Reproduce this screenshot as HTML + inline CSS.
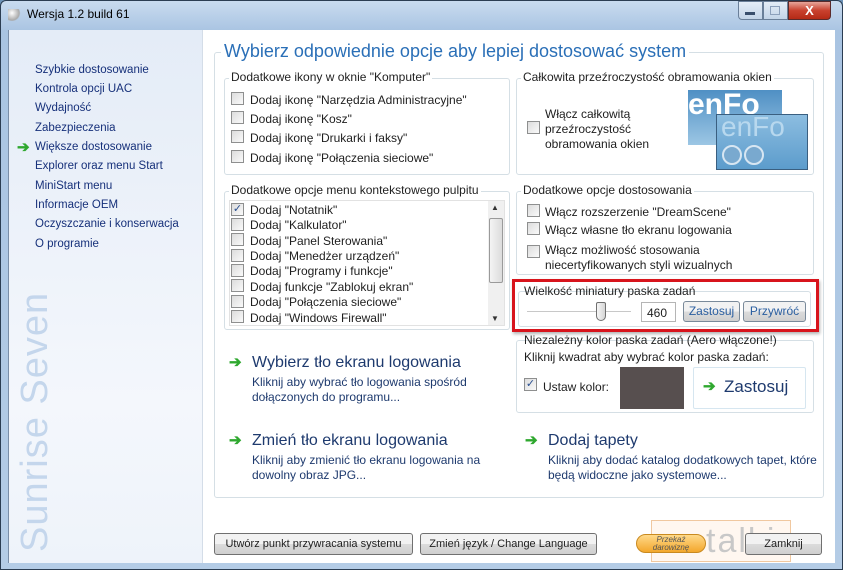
<!DOCTYPE html>
<html><head><meta charset="utf-8"><style>
*{margin:0;padding:0;box-sizing:border-box}
body{width:843px;height:570px;overflow:hidden;font-family:"Liberation Sans",sans-serif;font-size:12px;color:#1e1e1e;background:#6d93b8;position:relative}
.a{position:absolute}
.frame{left:0;top:0;width:843px;height:570px;background:linear-gradient(#c9dbef,#a9c4e2 30px,#b4cce6);border:1px solid #2b3d52;border-radius:6px 6px 0 0}
.left{left:8px;top:30px;width:194px;height:533px;background:linear-gradient(#e4ecf7,#f4f7fc 70%,#eef3fa);border-left:1px solid #7a8ea8}
.main{left:202px;top:30px;width:633px;height:533px;background:#fff;border-left:1px solid #d4dde8}
.nav{left:35px;color:#16307a;font-size:11.5px}
.grp{border:1px solid #d5dfe5;border-radius:3px}
.gt{background:#fff;padding:0 2px;font-size:12px;color:#222}
.cb{width:13px;height:13px;border:1px solid #8e8f8f;background:linear-gradient(135deg,#dcdcdc,#fafafa)}
.lbl{font-size:12px}
.btn{border:1px solid #707070;border-radius:3px;background:linear-gradient(#f2f2f2 50%,#dcdcdc 50%,#cfcfcf);font-size:11px;text-align:center}
.arrow{color:#2fa82f;font-weight:bold;font-size:15px}
.lk{color:#1e3a6e}
</style></head><body>
<div class="a frame"></div>
<div class="a" style="left:8px;top:9px;width:13px;height:12px;background:radial-gradient(circle at 4px 4px,#fff,#aaa 60%,transparent 70%)"></div>
<div class="a" style="left:27px;top:7px;font-size:12px;color:#000">Wersja 1.2 build 61</div>
<div class="a" style="left:738px;top:1px;width:25px;height:19px;border:1px solid #6a7f99;border-radius:0 0 0 4px;background:linear-gradient(#e4edf7,#c3d4e8)"></div>
<div class="a" style="left:745px;top:12px;width:10px;height:3px;background:#394e6c"></div>
<div class="a" style="left:763px;top:1px;width:25px;height:19px;border:1px solid #6a7f99;background:linear-gradient(#e4edf7,#c3d4e8)"></div>
<div class="a" style="left:770px;top:6px;width:10px;height:9px;border:1px solid #8da0bb"></div>
<div class="a" style="left:788px;top:1px;width:43px;height:19px;border:1px solid #5a2a2a;border-radius:0 0 4px 0;background:linear-gradient(#e6a59a,#c8412e 50%,#b52a16);color:#fff;font-weight:bold;text-align:center;line-height:17px;font-size:13px">X</div>
<div class="a left"></div>
<div class="a main"></div>
<div class="a nav" style="top:64px">Szybkie dostosowanie</div>
<div class="a nav" style="top:83px">Kontrola opcji UAC</div>
<div class="a nav" style="top:102px">Wydajność</div>
<div class="a nav" style="top:122px">Zabezpieczenia</div>
<div class="a arrow" style="left:17px;top:138px">➔</div>
<div class="a nav" style="top:141px">Większe dostosowanie</div>
<div class="a nav" style="top:160px">Explorer oraz menu Start</div>
<div class="a nav" style="top:180px">MiniStart menu</div>
<div class="a nav" style="top:199px">Informacje OEM</div>
<div class="a nav" style="top:218px">Oczyszczanie i konserwacja</div>
<div class="a nav" style="top:238px">O programie</div>
<div class="a" style="left:16px;top:552px;transform:rotate(-90deg);transform-origin:0 0;font-size:38px;line-height:38px;color:#c4d6ec;white-space:nowrap;letter-spacing:1px">Sunrise Seven</div>

<div class="a grp" style="left:214px;top:52px;width:610px;height:446px"></div>
<div class="a" style="left:221px;top:41px;background:#fff;padding:0 3px;font-size:18px;color:#2a6fb7">Wybierz odpowiednie opcje aby lepiej dostosować system</div>

<div class="a grp" style="left:224px;top:78px;width:286px;height:97px"></div>
<div class="a gt" style="left:229px;top:70px">Dodatkowe ikony w oknie "Komputer"</div>
<div class="a cb" style="left:231px;top:92px"></div><div class="a lbl" style="left:250px;top:93px">Dodaj ikonę "Narzędzia Administracyjne"</div>
<div class="a cb" style="left:231px;top:111px"></div><div class="a lbl" style="left:250px;top:112px">Dodaj ikonę "Kosz"</div>
<div class="a cb" style="left:231px;top:130px"></div><div class="a lbl" style="left:250px;top:131px">Dodaj ikonę "Drukarki i faksy"</div>
<div class="a cb" style="left:231px;top:150px"></div><div class="a lbl" style="left:250px;top:151px">Dodaj ikonę "Połączenia sieciowe"</div>

<div class="a grp" style="left:516px;top:78px;width:298px;height:97px"></div>
<div class="a gt" style="left:521px;top:70px">Całkowita przeźroczystość obramowania okien</div>
<div class="a cb" style="left:527px;top:121px"></div>
<div class="a lbl" style="left:545px;top:107px;line-height:15px">Włącz całkowitą<br>przeźroczystość<br>obramowania okien</div>
<div class="a" style="left:688px;top:90px;width:94px;height:55px;background:linear-gradient(#4f8fc4,#9cc6e4);color:#fff;font-weight:bold;font-size:30px;line-height:30px;overflow:hidden">enFo</div>
<div class="a" style="left:716px;top:114px;width:92px;height:56px;background:linear-gradient(#8cbde0,#5c9ccc);border:1px solid #3a5f80;color:#b8d8ee;font-size:28px;line-height:24px;overflow:hidden;padding-left:4px">enFo</div>
<div class="a" style="left:722px;top:145px;width:20px;height:20px;border-radius:50%;border:2px solid #d7e6f2;background:#79a9cf"></div>
<div class="a" style="left:744px;top:145px;width:20px;height:20px;border-radius:50%;border:2px solid #d7e6f2;background:#79a9cf"></div>

<div class="a grp" style="left:224px;top:191px;width:286px;height:139px"></div>
<div class="a gt" style="left:229px;top:183px">Dodatkowe opcje menu kontekstowego pulpitu</div>
<div class="a" style="left:229px;top:200px;width:276px;height:126px;border:1px solid #e2e2e2"></div>
<div class="a" style="left:488px;top:201px;width:16px;height:124px;background:#f0f0f0"></div>
<div class="a" style="left:489px;top:218px;width:14px;height:65px;border:1px solid #9a9a9a;border-radius:2px;background:linear-gradient(90deg,#f4f4f4,#dcdcdc)"></div>
<div class="a" style="left:491px;top:203px;font-size:8px;color:#333">▲</div>
<div class="a" style="left:491px;top:314px;font-size:8px;color:#333">▼</div>
<div class="a cb" style="left:231px;top:203px;color:#2a4f90;font-size:11px;line-height:11px;text-align:center">✓</div><div class="a lbl" style="left:250px;top:203px">Dodaj "Notatnik"</div>
<div class="a cb" style="left:231px;top:218px"></div><div class="a lbl" style="left:250px;top:218px">Dodaj "Kalkulator"</div>
<div class="a cb" style="left:231px;top:233px"></div><div class="a lbl" style="left:250px;top:234px">Dodaj "Panel Sterowania"</div>
<div class="a cb" style="left:231px;top:249px"></div><div class="a lbl" style="left:250px;top:249px">Dodaj "Menedżer urządzeń"</div>
<div class="a cb" style="left:231px;top:264px"></div><div class="a lbl" style="left:250px;top:264px">Dodaj "Programy i funkcje"</div>
<div class="a cb" style="left:231px;top:279px"></div><div class="a lbl" style="left:250px;top:280px">Dodaj funkcje "Zablokuj ekran"</div>
<div class="a cb" style="left:231px;top:295px"></div><div class="a lbl" style="left:250px;top:295px">Dodaj "Połączenia sieciowe"</div>
<div class="a cb" style="left:231px;top:310px"></div><div class="a lbl" style="left:250px;top:311px">Dodaj "Windows Firewall"</div>

<div class="a grp" style="left:516px;top:191px;width:298px;height:84px"></div>
<div class="a gt" style="left:521px;top:183px">Dodatkowe opcje dostosowania</div>
<div class="a cb" style="left:527px;top:204px"></div><div class="a lbl" style="left:545px;top:205px">Włącz rozszerzenie "DreamScene"</div>
<div class="a cb" style="left:527px;top:222px"></div><div class="a lbl" style="left:545px;top:223px">Włącz własne tło ekranu logowania</div>
<div class="a cb" style="left:527px;top:245px"></div><div class="a lbl" style="left:545px;top:243px;line-height:15px">Włącz możliwość stosowania<br>niecertyfikowanych styli wizualnych</div>

<div class="a" style="left:512px;top:279px;width:307px;height:53px;border:3px solid #d8141c;box-shadow:1px 2px 3px rgba(0,0,0,.3)"></div>
<div class="a grp" style="left:518px;top:291px;width:293px;height:36px"></div>
<div class="a gt" style="left:522px;top:284px;background:transparent">Wielkość miniatury paska zadań</div>
<div class="a" style="left:527px;top:311px;width:104px;height:2px;background:#c8c8c8;border-bottom:1px solid #fff"></div>
<div class="a" style="left:596px;top:302px;width:10px;height:19px;border:1px solid #707070;border-radius:2px 2px 5px 5px;background:linear-gradient(90deg,#f6f6f6,#d6d6d6)"></div>
<div class="a" style="left:641px;top:302px;width:35px;height:20px;border:1px solid #b5b5b5;padding:3px 0 0 5px">460</div>
<div class="a btn" style="left:683px;top:301px;width:57px;height:21px;color:#2a5ea0;line-height:19px;border-color:#7a8a9a;font-size:12px">Zastosuj</div>
<div class="a btn" style="left:743px;top:301px;width:63px;height:21px;color:#2a5ea0;line-height:19px;border-color:#7a8a9a;font-size:12px">Przywróć</div>

<div class="a grp" style="left:516px;top:340px;width:298px;height:73px"></div>
<div class="a gt" style="left:522px;top:333px;background:transparent">Niezależny kolor paska zadań (Aero włączone!)</div>
<div class="a lbl" style="left:524px;top:350px">Kliknij kwadrat aby wybrać kolor paska zadań:</div>
<div class="a cb" style="left:524px;top:378px;color:#2a4f90;font-size:11px;line-height:11px;text-align:center">✓</div><div class="a lbl" style="left:543px;top:380px">Ustaw kolor:</div>
<div class="a" style="left:620px;top:367px;width:64px;height:42px;background:#574f4f"></div>
<div class="a" style="left:693px;top:367px;width:113px;height:42px;border:1px solid #d6e6f0;border-radius:2px"></div>
<div class="a arrow" style="left:703px;top:377px">➔</div>
<div class="a lk" style="left:724px;top:377px;font-size:17px">Zastosuj</div>

<div class="a arrow" style="left:229px;top:353px">➔</div>
<div class="a lk" style="left:252px;top:354px;font-size:16px">Wybierz tło ekranu logowania</div>
<div class="a lk" style="left:252px;top:375px;font-size:12px;line-height:15px">Kliknij aby wybrać tło logowania spośród<br>dołączonych do programu...</div>
<div class="a arrow" style="left:229px;top:431px">➔</div>
<div class="a lk" style="left:252px;top:432px;font-size:16px">Zmień tło ekranu logowania</div>
<div class="a lk" style="left:252px;top:453px;font-size:12px;line-height:15px">Kliknij aby zmienić tło ekranu logowania na<br>dowolny obraz JPG...</div>
<div class="a arrow" style="left:525px;top:431px">➔</div>
<div class="a lk" style="left:548px;top:432px;font-size:16px">Dodaj tapety</div>
<div class="a lk" style="left:548px;top:453px;font-size:12px;line-height:15px">Kliknij aby dodać katalog dodatkowych tapet, które<br>będą widoczne jako systemowe...</div>

<div class="a btn" style="left:214px;top:533px;width:199px;height:22px;line-height:20px">Utwórz punkt przywracania systemu</div>
<div class="a btn" style="left:420px;top:533px;width:177px;height:22px;line-height:20px">Zmień język / Change Language</div>
<div class="a" style="left:651px;top:520px;width:140px;height:42px;border:1px solid #f0c8a0;background:rgba(255,240,225,.5)"></div>
<div class="a" style="left:636px;top:534px;width:70px;height:19px;border-radius:10px;background:linear-gradient(#ffd98a,#f3a72c);border:1px solid #c98a20;font-size:8px;color:#555;text-align:center;line-height:8px;padding-top:1px;font-style:italic">Przekaż<br>darowiznę</div>
<div class="a" style="left:706px;top:522px;font-size:34px;color:#c8c8c8;letter-spacing:2px">talki</div>
<div class="a btn" style="left:745px;top:533px;width:77px;height:22px;line-height:20px">Zamknij</div>
</body></html>
